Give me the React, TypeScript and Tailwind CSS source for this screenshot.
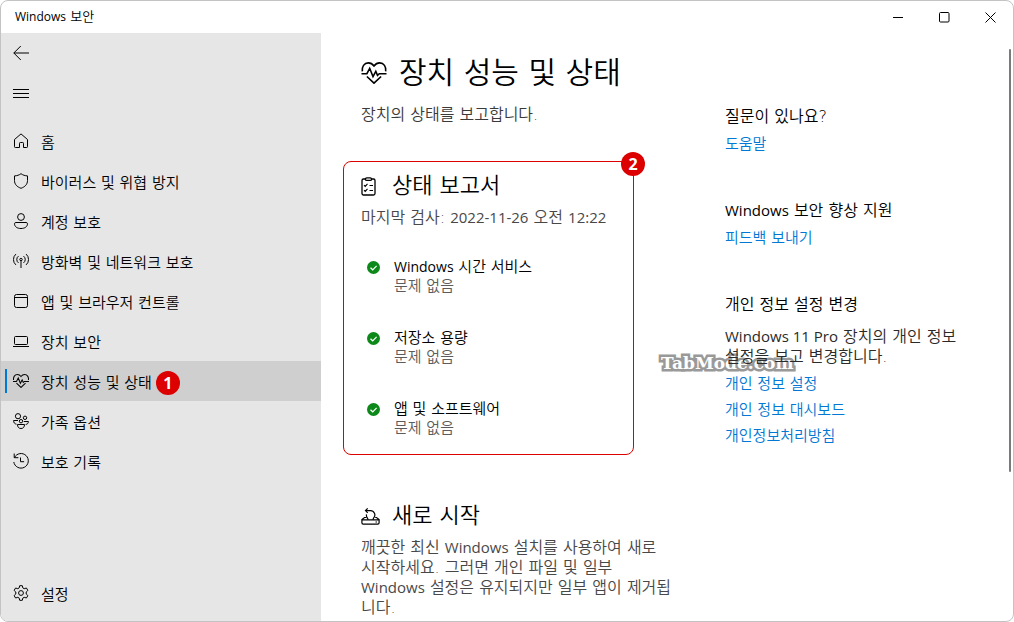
import React from "react";

type IconProps = { className?: string };

function HeartIcon({ className }: IconProps) {
  return (
    <svg viewBox="0 0 25 22" className={className} fill="none" stroke="currentColor" strokeWidth="1.6" aria-hidden="true">
      <path d="M.8 9.4C.2 4.6 2.7.9 6.8.9c2.6 0 4.3 1.2 5.7 3.1C13.9 2.100 15.600.9 18.200.9c4.100 0 6.600 3.700 6 8.500" />
      <path d="M0 11.700h5.400l2.800-5.400 3.300 8.300 2.800-5.300 1.700 4 1.800-1.600H25" />
      <path d="M5.400 14.500l7.100 6.700 7.100-6.700" />
    </svg>
  );
}

function Stroke16({ children, className = "size-4" }: { children: React.ReactNode; className?: string }) {
  return (
    <svg viewBox="0 0 16 16" className={className} fill="none" stroke="currentColor" strokeWidth="1" aria-hidden="true">
      {children}
    </svg>
  );
}

const icons = {
  home: (
    <Stroke16>
      <path d="M8 .9l6.500 5.600v7.200a.8.8 0 0 1-.8.8h-3.200v-4.200a.8.8 0 0 0-.8-.8H7.300a.8.8 0 0 0-.8.8v4.200H2.300a.8.8 0 0 1-.8-.8V6.500z" strokeLinejoin="round" />
    </Stroke16>
  ),
  shield: (
    <Stroke16>
      <path d="M8 .7C6.100 2.100 4 2.800 1.500 2.900v4.600c0 3.900 2.500 6.300 6.500 7.800 4-1.500 6.500-3.900 6.500-7.800V2.900C12 2.800 9.900 2.100 8 .7z" strokeLinejoin="round" />
    </Stroke16>
  ),
  account: (
    <Stroke16>
      <circle cx="8" cy="4" r="3.400" />
      <path d="M2.900 9.500h10.200c.8 0 1.400.5 1.400 1.200 0 3-2.700 4.800-6.500 4.800s-6.500-1.800-6.500-4.800c0-.7.6-1.200 1.400-1.200z" />
    </Stroke16>
  ),
  network: (
    <Stroke16>
      <circle cx="8" cy="6.500" r="1.200" />
      <path d="M8 7.700V15M5.500 9.900a4.200 4.200 0 0 1 0-6.800M10.500 3.100a4.200 4.200 0 0 1 0 6.800M2.900 11.900a7.200 7.200 0 0 1 0-10.800M13.100 1.100a7.200 7.200 0 0 1 0 10.800" />
    </Stroke16>
  ),
  app: (
    <Stroke16>
      <rect x="1.500" y="1.500" width="13" height="13" rx="2" />
      <path d="M1.500 4.500h13" />
    </Stroke16>
  ),
  laptop: (
    <Stroke16>
      <rect x="1.500" y="3.500" width="13" height="8" rx="1" />
      <path d="M0 13.500h16" />
    </Stroke16>
  ),
  heart: <HeartIcon className="h-[14px] w-4" />,
  family: (
    <Stroke16>
      <circle cx="5" cy="3.200" r="2.600" />
      <circle cx="12" cy="4.800" r="1.700" />
      <circle cx="8" cy="8.200" r="1.700" />
      <path d="M4.500 11.500h7c0 2.500-1.200 4-3.500 4s-3.500-1.500-3.500-4z" strokeLinejoin="round" />
      <path d="M5 7.500H.6c0 2 .9 3.400 2.900 3.700M10.800 8.500h4.600c0 1.700-1 2.800-2.700 3" />
    </Stroke16>
  ),
  history: (
    <Stroke16>
      <path d="M1.500 4.500A7.300 7.300 0 1 1 .8 9" />
      <path d="M1.200.5v4.200h4.200M7.500 4.500v4.200h3.600" />
    </Stroke16>
  ),
  settings: (
    <Stroke16>
      <circle cx="8" cy="8" r="2.400" />
      <path d="M6.700.7h2.600l.5 2.200 1.400.8 2.200-.7 1.500 2.400L13.200 7v2l1.700 1.600-1.500 2.400-2.200-.7-1.400.8-.5 2.200H6.700l-.5-2.200-1.400-.8-2.200.7-1.500-2.400L2.800 9V7L1.100 5.400 2.600 3l2.200.7 1.400-.8z" strokeLinejoin="round" />
    </Stroke16>
  ),
};

function Latin({ children, className = "text-[15px]" }: { children: React.ReactNode; className?: string }) {
  return <span className={`font-['Open_Sans',sans-serif] leading-none font-normal ${className}`}>{children}</span>;
}

function Badge({ children, className = "" }: { children: React.ReactNode; className?: string }) {
  return (
    <span className={`flex size-6 shrink-0 items-center justify-center rounded-full bg-[#dc0000] font-['Open_Sans',sans-serif] text-base leading-6 font-bold text-white ${className}`}>
      {children}
    </span>
  );
}

function NavItem({ icon, label, active = false }: { icon: React.ReactNode; label: string; active?: boolean }) {
  return (
    <a
      href="#"
      aria-current={active ? "page" : undefined}
      className={`relative flex h-10 items-center pl-3 ${active ? "bg-[#cfcfcf]" : "hover:bg-[#dadada]"}`}
    >
      {active && <span className="absolute top-2 left-1 h-6 w-[2px] bg-[#0078d4]" />}
      {icon}
      <span className="pt-[3px] pl-3 text-[15px] leading-5">{label}</span>
      {active && <Badge className="mt-1 ml-1">1</Badge>}
    </a>
  );
}

const navItems = [
  { icon: icons.home, label: "홈" },
  { icon: icons.shield, label: "바이러스 및 위협 방지" },
  { icon: icons.account, label: "계정 보호" },
  { icon: icons.network, label: "방화벽 및 네트워크 보호" },
  { icon: icons.app, label: "앱 및 브라우저 컨트롤" },
  { icon: icons.laptop, label: "장치 보안" },
  { icon: icons.heart, label: "장치 성능 및 상태", active: true },
  { icon: icons.family, label: "가족 옵션" },
  { icon: icons.history, label: "보호 기록" },
];

function StatusItem({ title }: { title: React.ReactNode }) {
  return (
    <li className="flex gap-[14px]">
      <svg viewBox="0 0 13 13" className="mt-[3px] size-[13px] shrink-0" aria-hidden="true">
        <circle cx="6.500" cy="6.500" r="6.500" fill="#0c8918" />
        <path d="M3.500 6.700l2.200 2.100 3.900-4" fill="none" stroke="#fff" strokeWidth="1.200" />
      </svg>
      <div className="text-[15px] leading-[19px]">
        <h3>{title}</h3>
        <p className="text-[#5c5c5c]">문제 없음</p>
      </div>
    </li>
  );
}

function TextLink({ children }: { children: React.ReactNode }) {
  return (
    <a href="#" className="block text-[15px] leading-[26px] text-[#0078d4] hover:underline">
      {children}
    </a>
  );
}

export default function App() {
  return (
    <div className="flex h-screen flex-col overflow-hidden rounded-lg border border-[#c3c3c3] bg-white font-['DejaVu_Sans','Noto_Sans_CJK_KR',sans-serif] font-[350] text-black">
      <header className="flex h-8 shrink-0 items-center justify-between pl-[14px]">
        <span className="text-[13px] leading-5">
          <Latin className="text-xs">Windows</Latin> 보안
        </span>
        <div className="flex h-full">
          <button aria-label="최소화" className="flex w-[46px] items-center justify-center">
            <svg viewBox="0 0 11 11" className="size-[11px]" stroke="currentColor"><path d="M0 5.500h10" /></svg>
          </button>
          <button aria-label="최대화" className="flex w-[46px] items-center justify-center">
            <svg viewBox="0 0 11 11" className="size-[11px]" fill="none" stroke="currentColor"><rect x=".5" y=".5" width="9.500" height="9.500" rx="1" /></svg>
          </button>
          <button aria-label="닫기" className="flex w-[46px] items-center justify-center">
            <svg viewBox="0 0 11 11" className="size-[11px]" stroke="currentColor"><path d="M.5.5l10 10M10.500.5l-10 10" /></svg>
          </button>
        </div>
      </header>

      <div className="flex min-h-0 flex-1">
        <aside className="flex w-80 shrink-0 flex-col bg-[#e6e6e6] pb-2">
          <button aria-label="뒤로" className="flex h-10 items-center pl-3">
            <Stroke16><path d="M.8 8H16M7.800 1L.8 8l7 7" /></Stroke16>
          </button>
          <button aria-label="메뉴" className="mb-2 flex h-10 items-center pl-3">
            <svg viewBox="0 0 16 16" className="size-4" stroke="currentColor"><path d="M0 4.500h16M0 8.500h16M0 12.500h16" /></svg>
          </button>
          <nav className="flex flex-1 flex-col">
            {navItems.map((item) => (
              <NavItem key={item.label} {...item} />
            ))}
            <div className="mt-auto">
              <NavItem icon={icons.settings} label="설정" />
            </div>
          </nav>
        </aside>

        <main className="flex min-w-0 flex-1 overflow-hidden pl-10">
          <div className="w-[320px] shrink-0 pt-5">
            <h1 className="flex items-center gap-3 text-[30px] leading-10 whitespace-nowrap">
              <HeartIcon className="h-[22px] w-[26px] shrink-0" />
              장치 성능 및 상태
            </h1>
            <p className="mt-3 text-base leading-5 text-[#3a3a3a]">장치의 상태를 보고합니다.</p>

            <section className="relative mt-9 mr-[47px] -ml-[18px] rounded-lg border border-[#dc0000] px-[17px] pt-[9px] pb-[16px]">
              <Badge className="absolute -top-[10px] -right-3">2</Badge>
              <h2 className="flex items-center gap-4 text-[22px] leading-[30px]">
                <svg viewBox="0 0 15 19" className="h-[19px] w-[15px] shrink-0" fill="none" stroke="currentColor" strokeWidth="1.300" aria-hidden="true">
                  <rect x="1" y="2" width="13" height="16" rx="1.500" />
                  <rect x="4.500" y=".8" width="6" height="2.600" rx="1.200" fill="#fff" />
                  <path d="M3 8.200l1.200 1.200 2.300-2.500M8.500 8.500h3.500M3 13.200l1.200 1.200 2.300-2.500M8.500 13.500h3.500" strokeWidth="1.100" />
                </svg>
                상태 보고서
              </h2>
              <p className="mt-[7px] text-base leading-5 whitespace-nowrap text-[#484848]">
                마지막 검사: <Latin>2022-11-26</Latin> 오전 <Latin>12:22</Latin>
              </p>
              <ul className="mt-[30px] flex flex-col gap-[33px] pl-[6px]">
                <StatusItem title={<><Latin className="text-sm">Windows</Latin> 시간 서비스</>} />
                <StatusItem title="저장소 용량" />
                <StatusItem title="앱 및 소프트웨어" />
              </ul>
            </section>

            <section className="mt-[46px]">
              <h2 className="flex items-center gap-3 text-[22px] leading-[30px]">
                <svg viewBox="0 0 19 17" className="h-[17px] w-[19px] shrink-0" fill="none" stroke="currentColor" strokeWidth="1.200" aria-hidden="true">
                  <path d="M5.500 9.500H3.500L.9 11.500v3.200c0 .8.500 1.400 1.300 1.400h14.600c.8 0 1.300-.6 1.300-1.400v-3.200l-2.600-2h-1.300M.9 11.800h17.200M14.500 14h1.500" />
                  <path d="M4.500 2.600h5a4.300 4.300 0 0 1 3.200 7.200l-.9 2M7.200 11.800l-.9-2a4.300 4.300 0 0 1-.8-3.500M6.700.4L4.500 2.600l2.200 2.200" />
                </svg>
                새로 시작
              </h2>
              <p className="mt-[7px] text-base leading-5 whitespace-nowrap text-[#484848]">
                깨끗한 최신 <Latin>Windows</Latin> 설치를 사용하여 새로
                <br />
                시작하세요. 그러면 개인 파일 및 일부
                <br />
                <Latin>Windows</Latin> 설정은 유지되지만 일부 앱이 제거됩
                <br />
                니다.
              </p>
            </section>
          </div>

          <div className="min-w-0 flex-1 pt-[74px] pl-11 text-base leading-5 whitespace-nowrap">
            <section>
              <h2 className="mb-1">질문이 있나요?</h2>
              <TextLink>도움말</TextLink>
            </section>
            <section className="mt-11">
              <h2 className="mb-1"><Latin>Windows</Latin> 보안 향상 지원</h2>
              <TextLink>피드백 보내기</TextLink>
            </section>
            <section className="relative isolate mt-11">
              <h2>개인 정보 설정 변경</h2>
              <p className="mt-3 mb-1 text-[#2a2a2a]">
                <Latin>Windows 11 Pro</Latin> 장치의 개인 정보
                <br />
                설정을 보고 변경합니다.
              </p>
              <span className="absolute top-14 -left-16 -z-10 font-['DejaVu_Serif',serif] text-[17px] leading-6 font-bold text-white [-webkit-text-stroke:5px_#999] [paint-order:stroke_fill]">
                TabMode.com
              </span>
              <TextLink>개인 정보 설정</TextLink>
              <TextLink>개인 정보 대시보드</TextLink>
              <TextLink>개인정보처리방침</TextLink>
            </section>
          </div>
          <div className="mt-4 mr-[2px] h-[72%] w-[2px] shrink-0 rounded-full bg-[#7a7a7a]" />
        </main>
      </div>
    </div>
  );
}
